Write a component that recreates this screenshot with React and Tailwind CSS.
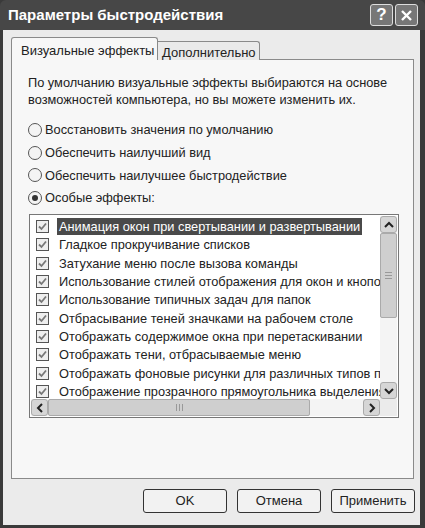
import React from 'react';

const effects = [
  'Анимация окон при свертывании и развертывании',
  'Гладкое прокручивание списков',
  'Затухание меню после вызова команды',
  'Использование стилей отображения для окон и кнопок',
  'Использование типичных задач для папок',
  'Отбрасывание теней значками на рабочем столе',
  'Отображать содержимое окна при перетаскивании',
  'Отображать тени, отбрасываемые меню',
  'Отображать фоновые рисунки для различных типов папок',
  'Отображение прозрачного прямоугольника выделения',
];

const modes = [
  'Восстановить значения по умолчанию',
  'Обеспечить наилучший вид',
  'Обеспечить наилучшее быстродействие',
  'Особые эффекты:',
];

const font = "font-['Liberation_Sans','DejaVu_Sans',sans-serif]";

const Radio = ({ checked }) => (
  <span className="w-[14px] h-[14px] rounded-full border border-[#555] bg-[#f4f4f4] flex items-center justify-center shrink-0">
    {checked && <span className="w-[6px] h-[6px] rounded-full bg-[#333]" />}
  </span>
);

const Check = () => (
  <span className="w-[13px] h-[13px] border border-[#555] bg-[#eee] flex items-center justify-center shrink-0">
    <svg width="9" height="9" viewBox="0 0 9 9">
      <path d="M1 4.5 L3.5 7 L8 1.5" fill="none" stroke="#777" strokeWidth="1.8" />
    </svg>
  </span>
);

const ScrollBtn = ({ dir }) => {
  const paths = {
    up: 'M3 9 L7 5 L11 9',
    down: 'M3 5 L7 9 L11 5',
    left: 'M9 3 L5 7 L9 11',
    right: 'M5 3 L9 7 L5 11',
  };
  return (
    <div className="w-[17px] h-[17px] rounded-[3px] border border-[#aaa] bg-[#d6d6d6] flex items-center justify-center shrink-0">
      <svg width="14" height="14" viewBox="0 0 14 14">
        <path d={paths[dir]} fill="none" stroke="#222" strokeWidth="2" />
      </svg>
    </div>
  );
};

const Button = ({ children }) => (
  <button className="w-[84px] h-[24px] rounded-[3px] border border-[#333] bg-[#f2f2f2] text-[13px] text-[#222] flex items-center justify-center">
    {children}
  </button>
);

export default function App() {
  return (
    <div className={`w-[425px] h-[528px] bg-[#3a3a3a] flex flex-col ${font}`}>
      {/* title bar */}
      <div className="h-[30px] bg-[#474747] rounded-t-[6px] flex items-center pl-[8px] pr-[7px] shrink-0">
        <span className="text-white font-bold text-[15px] flex-1">Параметры быстродействия</span>
        <div className="flex gap-[2px]">
          <div className="w-[23px] h-[22px] rounded-[3px] border border-[#ddd] bg-[#777] text-white font-bold text-[17px] flex items-center justify-center">?</div>
          <div className="w-[23px] h-[22px] rounded-[3px] border border-[#ddd] bg-[#777] flex items-center justify-center">
            <svg width="13" height="13" viewBox="0 0 13 13">
              <path d="M2 2 L11 11 M11 2 L2 11" stroke="#fff" strokeWidth="2.4" />
            </svg>
          </div>
        </div>
      </div>

      {/* window body */}
      <div className="flex-1 ml-[3px] mr-[5px] mb-[3px] bg-[#ebebeb] flex flex-col pl-[8px] pr-[4px] pt-[8px]">
        {/* tabs */}
        <div className="flex items-end h-[22px] relative z-10">
          <div className="w-[147px] h-[23px] border border-b-0 border-[#8a8a8a] bg-[#f7f7f7] rounded-t-[3px] text-[13px] text-[#222] pl-[9px] pt-[3px]">
            Визуальные эффекты
          </div>
          <div className="w-[102px] h-[19px] border border-l-0 border-b-0 border-[#8a8a8a] bg-[#eaeaea] rounded-tr-[3px] text-[13px] text-[#222] pl-[4px] pt-[1px]">
            Дополнительно
          </div>
        </div>

        {/* tab panel */}
        <div className="w-[403px] h-[420px] border border-[#8a8a8a] bg-[#f7f7f7] -mt-px pt-[14px] pl-[16px] shrink-0">
          <p className="text-[12.8px] leading-[17px] text-[#222]">
            По умолчанию визуальные эффекты выбираются на основе
            <br />
            возможностей компьютера, но вы можете изменить их.
          </p>

          <div className="mt-[15px] flex flex-col gap-[8.7px]">
            {modes.map((m, i) => (
              <label key={m} className="flex items-center gap-[3px] h-[14px] text-[12.8px] text-[#222]">
                <Radio checked={i === 3} />
                {m}
              </label>
            ))}
          </div>

          {/* effects list */}
          <div className="mt-[9px] ml-[1px] w-[370px] h-[204px] border border-[#777] bg-white p-px flex flex-col">
            <div className="flex flex-1 min-h-0">
              <div className="flex-1 overflow-hidden pt-px">
                {effects.map((e, i) => (
                  <div key={e} className="h-[18.4px] flex items-center pl-[5px] text-[12.8px] whitespace-nowrap">
                    <Check />
                    <span
                      className={`ml-[8px] px-[2px] leading-[17px] ${
                        i === 0 ? 'bg-[#4a4a4a] text-white' : 'text-[#222]'
                      }`}
                    >
                      {e}
                    </span>
                  </div>
                ))}
              </div>
              {/* vertical scrollbar */}
              <div className="w-[17px] flex flex-col bg-[#f4f4f4]">
                <ScrollBtn dir="up" />
                <div className="h-[85px] rounded-[2px] border border-[#aaa] bg-[#cfcfcf] flex items-center justify-center">
                  <span className="w-[7px] h-[7px] border-y border-[#999] relative">
                    <span className="absolute left-0 right-0 top-[2px] border-t border-[#999]" />
                  </span>
                </div>
                <div className="flex-1" />
                <ScrollBtn dir="down" />
              </div>
            </div>
            {/* horizontal scrollbar */}
            <div className="h-[17px] flex shrink-0">
              <div className="flex-1 flex bg-[#f4f4f4]">
                <ScrollBtn dir="left" />
                <div className="w-[262px] rounded-[2px] border border-[#aaa] bg-[#cfcfcf] flex items-center justify-center">
                  <span className="w-[7px] h-[7px] border-x border-[#999] relative">
                    <span className="absolute top-0 bottom-0 left-[2px] border-l border-[#999]" />
                  </span>
                </div>
                <div className="flex-1" />
                <ScrollBtn dir="right" />
              </div>
              <div className="w-[17px] bg-[#ebebeb]" />
            </div>
          </div>
        </div>

        {/* dialog buttons */}
        <div className="flex justify-end gap-[10px] mt-[10px] pr-[1px]">
          <Button>OK</Button>
          <Button>Отмена</Button>
          <Button>Применить</Button>
        </div>
      </div>
    </div>
  );
}
